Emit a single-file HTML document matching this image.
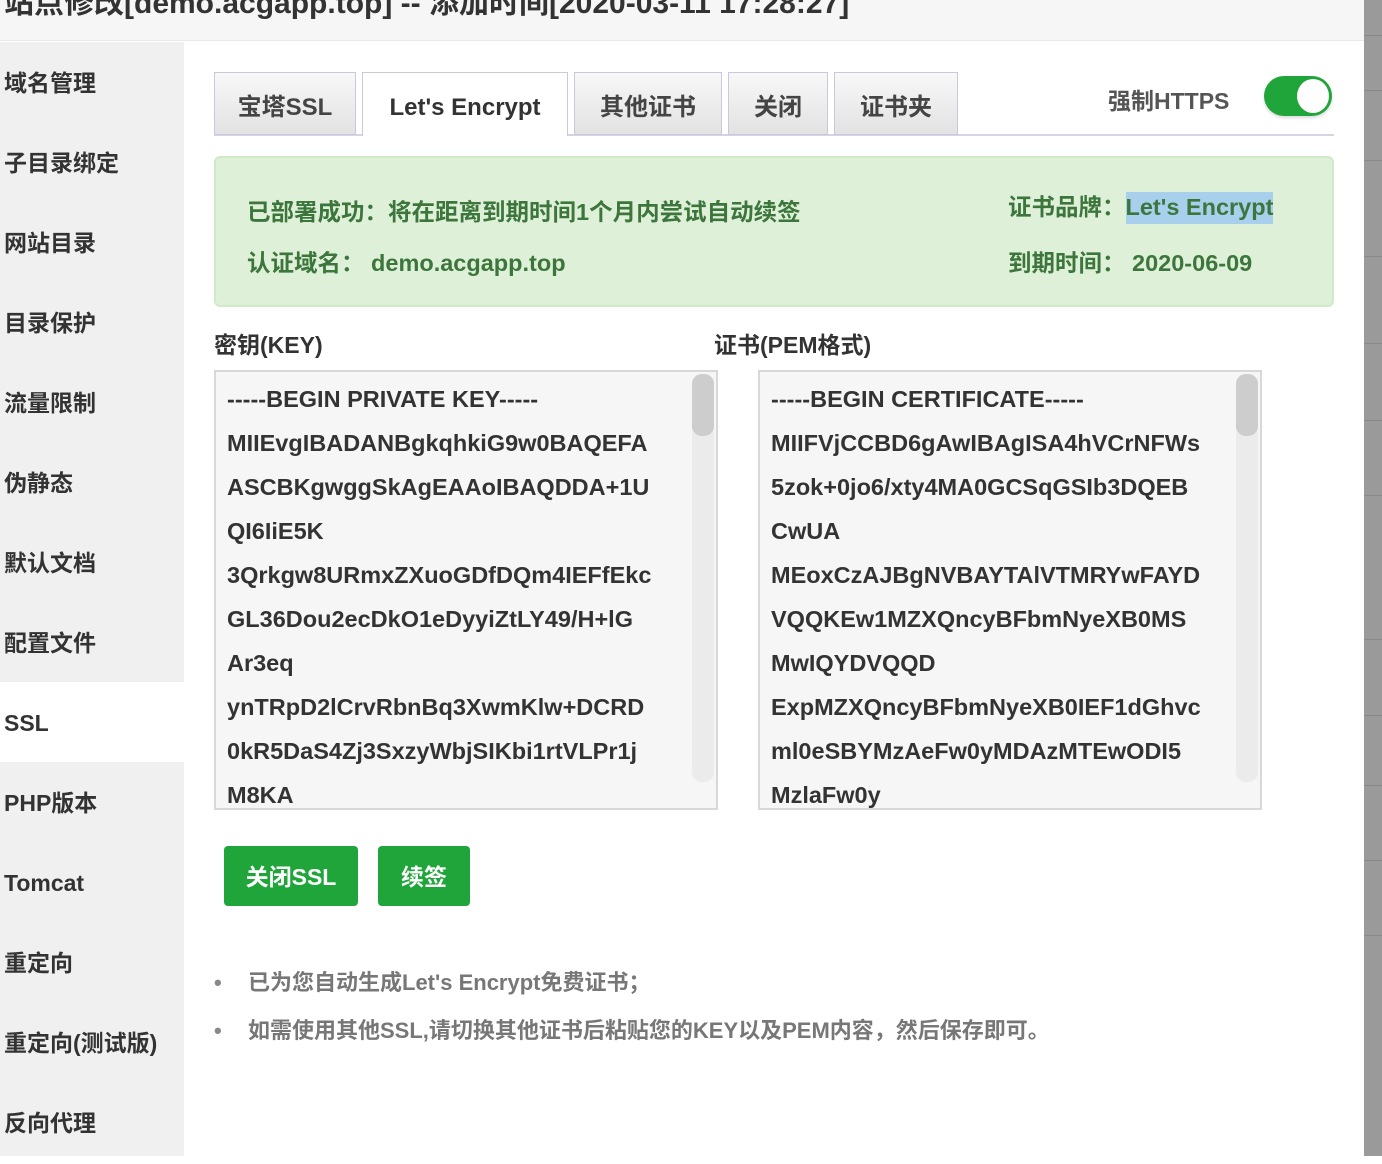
<!DOCTYPE html>
<html><head><meta charset="utf-8"><style>
*{margin:0;padding:0;box-sizing:border-box}
body{width:1382px;height:1156px;overflow:hidden;background:#fff;font-family:"Liberation Sans","Noto Sans CJK SC",sans-serif;font-weight:bold;position:relative;color:#333}
.hdr{position:absolute;left:0;top:0;width:1364px;height:41px;background:#f6f6f6;border-bottom:1px solid #e8e8e8}
.hdr span{position:absolute;left:4px;top:-22px;font-size:30px;color:#333;white-space:nowrap}
.side{position:absolute;left:0;top:42px;width:184px;height:1114px;background:#f0f0f0}
.side div{height:80px;line-height:82px;font-size:23px;padding-left:4px;color:#333}
.side .on{background:#fff}
.rs{position:absolute;left:1364px;top:0;width:18px;height:1156px;background:#9a9a9a}
.rs i{position:absolute;left:0;width:18px;height:1px;background:#888}
.tab{position:absolute;top:72px;height:63px;border:1px solid #c9c9dd;background:linear-gradient(#f8f8f8,#e2e2e2);font-size:24px;line-height:70px;text-align:center;color:#444}
.tab.on{background:#fff;border-bottom:none;height:64px;color:#333}
.line{position:absolute;left:214px;top:134px;width:1120px;height:2px;background:#d4d4e4}
.gb{position:absolute;left:214px;top:156px;width:1120px;height:151px;background:#dff0d8;border:2px solid #d0e9c6;border-radius:6px;color:#3c763d;font-size:23.5px}
.gb span{position:absolute;white-space:nowrap}
.lbl{position:absolute;top:326px;font-size:23px;color:#333}
.ta{position:absolute;top:370px;width:504px;height:440px;border:2px solid #d8d8d8;background:#f6f6f6;overflow:hidden;font-size:23.5px;line-height:44px;padding:5px 0 0 11px;color:#333;white-space:nowrap}
.sb{position:absolute;right:2px;top:2px;width:22px;height:408px;background:#ebebeb;border-radius:10px}
.sb i{position:absolute;left:0;top:0;width:22px;height:62px;background:#cdcdcd;border-radius:10px}
.btn{position:absolute;top:846px;height:60px;background:#20a53a;color:#fff;border-radius:4px;font-size:23px;line-height:62px;text-align:center}
.li{position:absolute;left:214px;font-size:22px;color:#777;white-space:nowrap}
.li b{display:inline-block;width:34px;color:#888}
</style></head><body>
<div class="hdr"><span>站点修改[demo.acgapp.top] -- 添加时间[2020-03-11 17:28:27]</span></div>
<div class="side">
<div>域名管理</div><div>子目录绑定</div><div>网站目录</div><div>目录保护</div><div>流量限制</div><div>伪静态</div><div>默认文档</div><div>配置文件</div><div class="on">SSL</div><div>PHP版本</div><div>Tomcat</div><div>重定向</div><div>重定向(测试版)</div><div>反向代理</div>
</div>
<div class="rs"><i style="top:35px"></i><i style="top:90px"></i><i style="top:160px"></i><i style="top:256px"></i><i style="top:343px"></i><i style="top:420px"></i><i style="top:495px"></i><i style="top:639px"></i><i style="top:715px"></i><i style="top:785px"></i><i style="top:860px"></i><i style="top:935px"></i></div>
<div class="line"></div>
<div class="tab" style="left:214px;width:142px">宝塔SSL</div>
<div class="tab on" style="left:362px;width:206px">Let's Encrypt</div>
<div class="tab" style="left:574px;width:148px">其他证书</div>
<div class="tab" style="left:728px;width:100px">关闭</div>
<div class="tab" style="left:834px;width:124px">证书夹</div>
<div style="position:absolute;left:1108px;top:82px;font-size:23px;color:#555">强制HTTPS</div>
<div style="position:absolute;left:1264px;top:76px;width:68px;height:40px;border-radius:20px;background:#20a53a;box-shadow:0 2px 3px rgba(0,0,0,.15)"><div style="position:absolute;right:3px;top:3px;width:32px;height:34px;border-radius:50%;background:#fff"></div></div>
<div class="gb">
<span style="left:31px;top:35px">已部署成功：将在距离到期时间1个月内尝试自动续签</span>
<span style="left:31px;top:86px">认证域名： demo.acgapp.top</span>
<span style="left:792px;top:30px">证书品牌：<span style="position:static;background:#a8d0ec;padding:2px 0 4px">Let's Encrypt</span></span>
<span style="left:792px;top:86px">到期时间： 2020-06-09</span>
</div>
<div class="lbl" style="left:214px">密钥(KEY)</div>
<div class="lbl" style="left:714px">证书(PEM格式)</div>
<div class="ta" style="left:214px">-----BEGIN PRIVATE KEY-----<br>MIIEvgIBADANBgkqhkiG9w0BAQEFA<br>ASCBKgwggSkAgEAAoIBAQDDA+1U<br>QI6IiE5K<br>3Qrkgw8URmxZXuoGDfDQm4IEFfEkc<br>GL36Dou2ecDkO1eDyyiZtLY49/H+lG<br>Ar3eq<br>ynTRpD2lCrvRbnBq3XwmKlw+DCRD<br>0kR5DaS4Zj3SxzyWbjSIKbi1rtVLPr1j<br>M8KA<div class="sb"><i></i></div></div>
<div class="ta" style="left:758px">-----BEGIN CERTIFICATE-----<br>MIIFVjCCBD6gAwIBAgISA4hVCrNFWs<br>5zok+0jo6/xty4MA0GCSqGSIb3DQEB<br>CwUA<br>MEoxCzAJBgNVBAYTAlVTMRYwFAYD<br>VQQKEw1MZXQncyBFbmNyeXB0MS<br>MwIQYDVQQD<br>ExpMZXQncyBFbmNyeXB0IEF1dGhvc<br>ml0eSBYMzAeFw0yMDAzMTEwODI5<br>MzlaFw0y<div class="sb"><i></i></div></div>
<div class="btn" style="left:224px;width:134px">关闭SSL</div>
<div class="btn" style="left:378px;width:92px">续签</div>
<div class="li" style="top:965px"><b>•</b>已为您自动生成Let's Encrypt免费证书；</div>
<div class="li" style="top:1013px"><b>•</b>如需使用其他SSL,请切换其他证书后粘贴您的KEY以及PEM内容，然后保存即可。</div>
</body></html>
